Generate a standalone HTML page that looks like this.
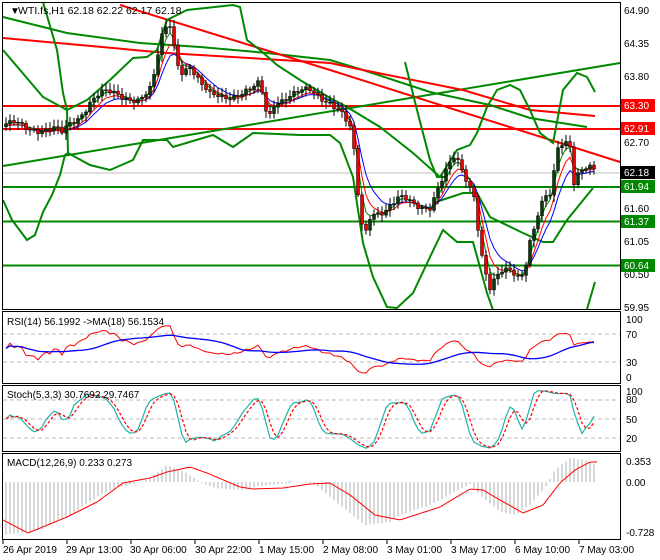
<!DOCTYPE html>
<html><head><meta charset="utf-8"><style>
html,body{margin:0;padding:0;background:#fff;width:660px;height:560px;overflow:hidden}
svg{display:block;font-family:"Liberation Sans",sans-serif;font-size:10px}
</style></head><body>
<svg id="s" width="660" height="560" viewBox="0 0 660 560" xmlns="http://www.w3.org/2000/svg">
<rect width="660" height="560" fill="#fff"/>
<g id="main"></g>
<g fill="none" stroke="#000" stroke-width="1">
<rect x="2.5" y="2.5" width="618" height="307"/>
<rect x="2.5" y="311.5" width="618" height="72"/>
<rect x="2.5" y="385.5" width="618" height="66"/>
<rect x="2.5" y="453.5" width="618" height="86"/>
</g>
<g fill="#000">
<text x="10" y="14">&#9660;</text>
<text x="18" y="14" font-size="10.5">WTI.fs,H1  62.18 62.22 62.17 62.18</text>
<text x="7" y="325">RSI(14) 56.1992  -&gt;MA(18) 56.1534</text>
<text x="7" y="398">Stoch(5,3,3) 30.7692 29.7467</text>
<text x="7" y="466">MACD(12,26,9) 0.233 0.273</text>
</g>
<g font-size="10" fill="#000">
<text x="624" y="14">64.90</text><text x="624" y="47">64.35</text><text x="624" y="80">63.80</text>
<text x="624" y="146">62.70</text><text x="624" y="212">61.60</text><text x="624" y="245">61.05</text>
<text x="624" y="278">60.50</text><text x="624" y="311">59.95</text>
<rect x="621" y="99" width="34" height="13" fill="#f00"/><text x="624" y="109" fill="#fff">63.30</text>
<rect x="621" y="122" width="34" height="13" fill="#f00"/><text x="624" y="132" fill="#fff">62.91</text>
<rect x="621" y="166" width="34" height="13" fill="#000"/><text x="624" y="176" fill="#fff">62.18</text>
<rect x="621" y="180" width="34" height="13" fill="#080"/><text x="624" y="190" fill="#fff">61.94</text>
<rect x="621" y="215" width="34" height="13" fill="#080"/><text x="624" y="225" fill="#fff">61.37</text>
<rect x="621" y="259" width="34" height="13" fill="#080"/><text x="624" y="269" fill="#fff">60.64</text>
<text x="626" y="323">100</text><text x="626" y="338">70</text><text x="626" y="366">30</text><text x="626" y="381">0</text>
<text x="626" y="395">100</text><text x="626" y="403">80</text><text x="626" y="423">50</text><text x="626" y="442">20</text>
<text x="626" y="465">0.353</text><text x="626" y="486">0.00</text><text x="626" y="536">-0.728</text>
</g>
<g font-size="10" fill="#000">
<text x="3" y="553">26 Apr 2019</text><text x="66" y="553">29 Apr 13:00</text><text x="130" y="553">30 Apr 06:00</text>
<text x="195" y="553">30 Apr 22:00</text><text x="259" y="553">1 May 15:00</text><text x="323" y="553">2 May 08:00</text>
<text x="387" y="553">3 May 01:00</text><text x="451" y="553">3 May 17:00</text><text x="515" y="553">6 May 10:00</text>
<text x="579" y="553">7 May 03:00</text>
</g>
</svg>
<script>
var NS="http://www.w3.org/2000/svg",G=document.getElementById("main");
function el(t,a){var e=document.createElementNS(NS,t);for(var k in a)e.setAttribute(k,a[k]);G.appendChild(e);return e;}
function pl(pts,c,w,extra){var a={points:pts.map(p=>p.join(",")).join(" "),fill:"none",stroke:c,"stroke-width":w};if(extra)for(var k in extra)a[k]=extra[k];return el("polyline",a);}
function ln(x1,y1,x2,y2,c,w,d){var a={x1:x1,y1:y1,x2:x2,y2:y2,stroke:c,"stroke-width":w};if(d)a["stroke-dasharray"]=d;el("line",a);}
ln(3,334,620,334,"#bbb",1,"4,3");ln(3,362,620,362,"#bbb",1,"4,3");
ln(3,400,620,400,"#bbb",1,"4,3");ln(3,419,620,419,"#bbb",1,"4,3");ln(3,438,620,438,"#bbb",1,"4,3");
ln(3,173,620,173,"#c0c0c0",1);
ln(3,106,620,106,"#f00",2);ln(3,129,620,129,"#f00",2);
ln(3,187,620,187,"#080",2);ln(3,221.5,620,221.5,"#080",2);ln(3,265.5,620,265.5,"#080",2);
ln(3,166,620,63,"#080",2);
pl([[3,17],[67,33],[140,43],[200,47],[267,53],[330,60],[363,70],[430,92],[490,105],[530,118],[587,127]],"#080",2);
pl([[120,5],[330,70],[620,162]],"#f00",2);
pl([[3,38],[167,53],[330,63],[363,70],[463,90],[530,110],[595,116]],"#f00",2);
pl([[3,50],[20,70],[43,97],[67,110],[87,100],[110,80],[133,58],[147,57],[157,50],[167,20],[187,10],[233,5],[240,7],[247,40],[260,50],[277,65],[300,80],[330,98],[347,107],[380,127],[413,153],[440,177],[457,150],[470,145],[477,133],[487,107],[497,90],[510,85],[520,90],[530,110],[540,133],[553,143],[563,90],[577,73],[587,77],[595,92]],"#080",2);
pl([[43,2],[57,50],[63,93],[67,110],[68,153]],"#080",2);
pl([[3,200],[12,220],[27,240],[35,235],[43,212],[52,195],[60,175],[65,155],[68,153],[90,165],[110,170],[133,160],[143,140],[167,140],[173,147],[213,135],[233,147],[253,133],[300,135],[330,135],[340,143],[353,177],[363,243],[373,277],[387,307],[397,308],[413,293],[430,257],[443,230],[457,242],[473,242],[478,260],[487,293],[493,310]],"#080",2);
pl([[405,62],[417,110],[430,160],[437,177],[447,177]],"#080",2);
pl([[433,203],[463,193],[477,193],[490,217],[523,233],[543,242],[553,242],[567,220],[593,188]],"#080",2);
pl([[587,309],[595,282]],"#080",2);
var K=[[5,127],[15,125],[30,127],[55,130],[62,135],[70,125],[80,115],[90,100],[100,93],[120,97],[140,97],[150,90],[155,75],[160,45],[165,30],[170,25],[175,50],[180,70],[190,65],[200,85],[210,97],[225,95],[240,93],[250,92],[260,85],[268,120],[275,100],[290,95],[310,92],[330,100],[340,110],[350,130],[355,160],[360,220],[365,235],[370,215],[375,210],[385,210],[400,200],[420,205],[430,205],[440,185],[448,170],[455,158],[462,170],[470,185],[475,195],[480,245],[485,270],[490,290],[500,275],[510,270],[520,275],[525,265],[530,240],[535,225],[540,210],[548,195],[552,200],[556,150],[560,145],[565,140],[570,142],[574,180],[580,168],[590,170],[595,172]];
function mk(A){return function(x){for(var i=1;i<A.length;i++)if(x<=A[i][0]){var a=A[i-1],b=A[i];return a[1]+(b[1]-a[1])*(x-a[0])/(b[0]-a[0]);}return A[A.length-1][1];};}
var ip=mk(K);
var xs=[],C=[],O=[],H=[],L=[];var prev=ip(6);
for(var x=6;x<=594;x+=4){var c=ip(x)+Math.sin(x*1.7)*4+Math.sin(x*0.53)*2;xs.push(x);O.push(prev);C.push(c);H.push(Math.min(prev,c)-2-Math.abs(Math.sin(x*2.3))*5);L.push(Math.max(prev,c)+2+Math.abs(Math.cos(x*1.9))*5);prev=c;}
function ema(a,n){var k=2/(n+1),r=[a[0]];for(var i=1;i<a.length;i++)r.push(a[i]*k+r[i-1]*(1-k));return r;}
function sma(a,n){return a.map((v,i)=>{var s=0,c=0;for(var j=Math.max(0,i-n+1);j<=i;j++){s+=a[j];c++;}return s/c;});}
[[ema(C,8),"#00f"],[ema(C,5),"#f00"],[ema(C,3),"#080"]].forEach(function(m){pl(xs.map((x,i)=>[x,m[0][i]+ (m[1]=="#080"?0:2)]),m[1],1);});
for(var i=0;i<xs.length;i++){var x=xs[i];ln(x,H[i],x,L[i],"#000",1);var t=Math.min(O[i],C[i]),h=Math.max(1,Math.abs(O[i]-C[i]));el("rect",{x:x-1.5,y:t,width:3,height:h,fill:C[i]<O[i]?"#0a3a0a":"#e00",stroke:"#000","stroke-width":0.5});}
var P=C.map(v=>-v/60),g=[],l=[];for(var i=1;i<P.length;i++){var d=P[i]-P[i-1];g.push(Math.max(d,0));l.push(Math.max(-d,0));}
var ag=0.01,al=0.01,rsi=[50];for(var i=0;i<g.length;i++){ag=(ag*13+g[i])/14;al=(al*13+l[i])/14;rsi.push(100-100/(1+ag/al));}
var rma=sma(rsi,18);
pl(xs.map((x,i)=>[x,378-rsi[i]*0.59]),"#f00",1);pl(xs.map((x,i)=>[x,378-rma[i]*0.59]),"#00f",1.3);
var k=[];for(var i=0;i<P.length;i++){var hh=-1e9,ll=1e9;for(var j=Math.max(0,i-4);j<=i;j++){hh=Math.max(hh,-H[j]/60);ll=Math.min(ll,-L[j]/60);}k.push(hh>ll?100*(P[i]-ll)/(hh-ll):50);}
var k3=sma(k,3),d3=sma(k3,3);
pl(xs.map((x,i)=>[x,450.7-k3[i]*0.633]),"#20b2aa",1.2);pl(xs.map((x,i)=>[x,450.7-d3[i]*0.633]),"#f00",1.2,{"stroke-dasharray":"3,2"});
// MACD hand keypoints
var hist=mk([[3,535],[40,530],[70,515],[100,495],[115,488],[140,482],[150,478],[167,465],[185,472],[200,482],[215,488],[240,490],[260,486],[300,482],[315,484],[340,505],[365,525],[390,522],[400,515],[430,505],[455,492],[470,484],[480,495],[500,512],[515,515],[530,505],[545,488],[555,470],[570,458],[585,460],[595,465]]);
var sig=mk([[3,520],[28,533],[67,517],[97,502],[123,483],[150,478],[167,472],[190,467],[207,473],[240,487],[253,489],[283,488],[310,484],[330,483],[350,495],[375,515],[400,520],[440,507],[470,489],[483,490],[500,500],[523,513],[543,505],[560,483],[575,470],[590,462],[597,462]]);
for(var x=6;x<=594;x+=4){ln(x,482,x,hist(x),"#b0b0b0",1);}
var sp=[];for(var x=3;x<=597;x+=2)sp.push([x,sig(x)]);pl(sp,"#f00",1);
[3,67,131,195,259,323,387,451,515,579].forEach(x=>ln(x,540,x,544,"#000",1));
</script>
</body></html>
